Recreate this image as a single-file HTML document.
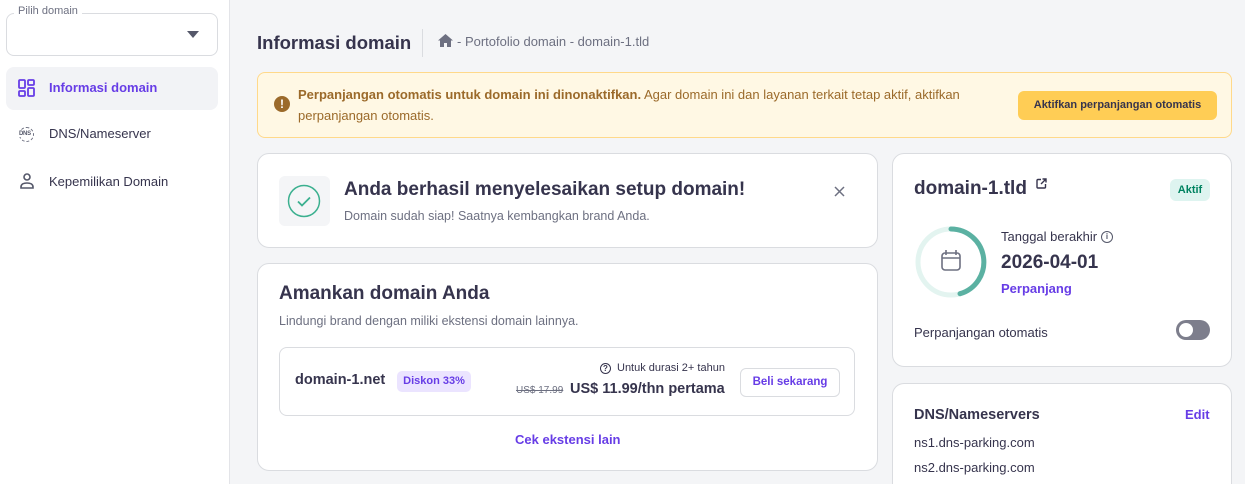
<!DOCTYPE html>
<html><head><meta charset="utf-8"><style>
*{box-sizing:border-box;margin:0;padding:0}
html{width:1245px;height:484px;overflow:hidden}
body{width:1245px;height:484px;overflow:hidden;background:#f4f5f7;font-family:"Liberation Sans",sans-serif;color:#2f1c6a;position:relative}
.a{position:absolute}
.side{left:0;top:0;width:230px;height:484px;background:#fff;border-right:1px solid #e3e4e8}
.card{background:#fff;border:1px solid #dadce0;border-radius:12px}
.t{color:#36344d}
.g{color:#6d7081}
.p{color:#673de6}
</style></head><body>
<div class="a side">
  <div class="a" style="left:6px;top:13px;width:212px;height:43px;border:1px solid #dadce0;border-radius:8px"></div>
  <div class="a" style="left:14px;top:5px;background:#fff;padding:0 4px;font-size:11px;color:#6d7081">Pilih domain</div>
  <div class="a" style="left:187px;top:31px;width:0;height:0;border-left:6px solid transparent;border-right:6px solid transparent;border-top:7px solid #55586a"></div>
  <div class="a" style="left:6px;top:67px;width:212px;height:43px;background:#f2f3f6;border-radius:8px"></div>
  <svg class="a" style="left:18px;top:79px" width="18" height="18" viewBox="0 0 18 18" fill="none" stroke="#673de6" stroke-width="1.8"><rect x="1" y="1" width="6" height="8" rx="1"/><rect x="10" y="1" width="6" height="5" rx="1"/><rect x="10" y="9" width="6" height="8" rx="1"/><rect x="1" y="12" width="6" height="5" rx="1"/></svg>
  <div class="a p" style="left:49px;top:80px;font-size:13px;font-weight:bold">Informasi domain</div>
  <div class="a" style="left:19px;top:127px;width:15px;height:15px;border-radius:50%;border:1.5px dashed #6d7081"></div>
  <div class="a" style="left:19px;top:131px;font-size:6px;font-weight:bold;color:#55586a;background:#fff;letter-spacing:-.3px">DNS</div>
  <div class="a t" style="left:49px;top:126px;font-size:13px">DNS/Nameserver</div>
  <svg class="a" style="left:20px;top:173px" width="14" height="16" viewBox="0 0 14 16" fill="none" stroke="#55586a" stroke-width="1.6"><circle cx="7" cy="4" r="3"/><path d="M1 15v-1c0-3 3-4 6-4s6 1 6 4v1z"/></svg>
  <div class="a t" style="left:49px;top:174px;font-size:13px">Kepemilikan Domain</div>
</div>

<div class="a t" style="left:257px;top:32px;font-size:18.5px;font-weight:bold">Informasi domain</div>
<div class="a" style="left:422px;top:29px;width:1px;height:28px;background:#dadce0"></div>
<svg class="a" style="left:438px;top:34px" width="15" height="13" viewBox="0 0 15 13"><path d="M7.5 0L0 6.5h2V13h4V9h3v4h4V6.5h2z" fill="#6d7081"/></svg>
<div class="a g" style="left:457px;top:34px;font-size:13px">- Portofolio domain - domain-1.tld</div>

<div class="a" style="left:257px;top:72px;width:975px;height:66px;background:#fff8e4;border:1px solid #ffd98a;border-radius:8px"></div>
<div class="a" style="left:274px;top:96px;width:16px;height:16px;border-radius:50%;background:#9b6a2a;color:#fff;font-size:12px;font-weight:bold;text-align:center;line-height:16px">!</div>
<div class="a" style="left:298px;top:84px;width:690px;font-size:13px;line-height:21px;color:#9b6a2a"><b>Perpanjangan otomatis untuk domain ini dinonaktifkan.</b> Agar domain ini dan layanan terkait tetap aktif, aktifkan perpanjangan otomatis.</div>
<div class="a" style="left:1018px;top:91px;width:199px;height:29px;background:#ffcd55;border-radius:6px;font-size:11px;font-weight:bold;color:#36344d;text-align:center;line-height:29px">Aktifkan perpanjangan otomatis</div>

<div class="a card" style="left:257px;top:153px;width:621px;height:95px"></div>
<div class="a" style="left:279px;top:176px;width:51px;height:50px;background:#f4f5f7;border-radius:6px"></div>
<svg class="a" style="left:285px;top:182px" width="38" height="38" viewBox="0 0 38 38" fill="none" stroke="#3bb08f" stroke-width="1.5"><circle cx="19" cy="19" r="15.5"/><path d="M13 19.5l4 4 8-8" stroke-width="1.8"/></svg>
<div class="a t" style="left:344px;top:179px;font-size:19px;font-weight:bold">Anda berhasil menyelesaikan setup domain!</div>
<div class="a g" style="left:344px;top:209px;font-size:12.5px">Domain sudah siap! Saatnya kembangkan brand Anda.</div>
<svg class="a" style="left:834px;top:186px" width="11" height="11" viewBox="0 0 11 11" stroke="#6d7081" stroke-width="1.5"><path d="M1 1l9 9M10 1l-9 9"/></svg>

<div class="a card" style="left:257px;top:263px;width:621px;height:208px"></div>
<div class="a t" style="left:279px;top:283px;font-size:19px;font-weight:bold">Amankan domain Anda</div>
<div class="a g" style="left:279px;top:314px;font-size:12.5px">Lindungi brand dengan miliki ekstensi domain lainnya.</div>
<div class="a" style="left:279px;top:347px;width:576px;height:69px;border:1px solid #dadce0;border-radius:8px"></div>
<div class="a t" style="left:295px;top:372px;font-size:14.5px;font-weight:bold">domain-1.net</div>
<div class="a" style="left:397px;top:371px;width:74px;height:21px;background:#ebe4ff;border-radius:5px;font-size:11px;font-weight:bold;color:#673de6;text-align:center;line-height:21px">Diskon 33%</div>
<div class="a" style="left:600px;top:363px;width:11px;height:11px;border:1.3px solid #36344d;border-radius:50%;font-size:8px;font-weight:bold;text-align:center;line-height:9px;color:#36344d">?</div>
<div class="a t" style="left:617px;top:362px;font-size:11px">Untuk durasi 2+ tahun</div>
<div class="a g" style="left:516px;top:385px;font-size:10px;text-decoration:line-through">US$ 17.99</div>
<div class="a t" style="left:570px;top:381px;font-size:14.5px;font-weight:bold">US$ 11.99/thn pertama</div>
<div class="a" style="left:740px;top:368px;width:100px;height:29px;border:1px solid #dadce0;border-radius:6px;font-size:11.5px;font-weight:bold;color:#673de6;text-align:center;line-height:27px">Beli sekarang</div>
<div class="a p" style="left:515px;top:432px;font-size:13px;font-weight:bold">Cek ekstensi lain</div>

<div class="a card" style="left:892px;top:153px;width:340px;height:214px"></div>
<div class="a t" style="left:914px;top:178px;font-size:19px;font-weight:bold">domain-1.tld</div>
<svg class="a" style="left:1036px;top:178px" width="11" height="11" viewBox="0 0 11 11" fill="none" stroke="#36344d" stroke-width="1.4"><path d="M5 1.5H2a1 1 0 0 0-1 1V9a1 1 0 0 0 1 1h6.5a1 1 0 0 0 1-1V6M6.5 1H10v3.5M10 1L5 6"/></svg>
<div class="a" style="left:1170px;top:179px;width:40px;height:22px;background:#def4f0;border-radius:6px;font-size:11px;font-weight:bold;color:#008361;text-align:center;line-height:22px">Aktif</div>
<svg class="a" style="left:914px;top:225px" width="74" height="74" viewBox="0 0 74 74" fill="none"><circle cx="37" cy="37" r="33" stroke="#e3f4f0" stroke-width="5"/><path d="M37 4A33 33 0 0 1 46 68.7" stroke="#5bb1a2" stroke-width="5" stroke-linecap="round"/><rect x="28" y="28" width="18" height="17" rx="3" stroke="#6d7081" stroke-width="1.6"/><path d="M28 33h18M32 25v5M42 25v5" stroke="#6d7081" stroke-width="1.6"/></svg>
<div class="a t" style="left:1001px;top:229px;font-size:13px">Tanggal berakhir</div>
<div class="a" style="left:1101px;top:231px;width:12px;height:12px;border:1.2px solid #55586a;border-radius:50%;font-size:8px;text-align:center;line-height:10px;color:#55586a;font-weight:bold">i</div>
<div class="a t" style="left:1001px;top:252px;font-size:19px;font-weight:bold">2026-04-01</div>
<div class="a p" style="left:1001px;top:281px;font-size:13px;font-weight:bold">Perpanjang</div>
<div class="a t" style="left:914px;top:325px;font-size:13px">Perpanjangan otomatis</div>
<div class="a" style="left:1176px;top:320px;width:34px;height:20px;background:#7d7e8c;border-radius:10px"></div>
<div class="a" style="left:1179px;top:323px;width:14px;height:14px;background:#fff;border-radius:50%"></div>

<div class="a card" style="left:892px;top:383px;width:340px;height:101px;border-bottom:none;border-radius:12px 12px 0 0"></div>
<div class="a t" style="left:914px;top:407px;font-size:14.5px;font-weight:bold">DNS/Nameservers</div>
<div class="a p" style="left:1185px;top:407px;font-size:13px;font-weight:bold">Edit</div>
<div class="a t" style="left:914px;top:435px;font-size:13px">ns1.dns-parking.com</div>
<div class="a t" style="left:914px;top:460px;font-size:13px">ns2.dns-parking.com</div>
</body></html>
